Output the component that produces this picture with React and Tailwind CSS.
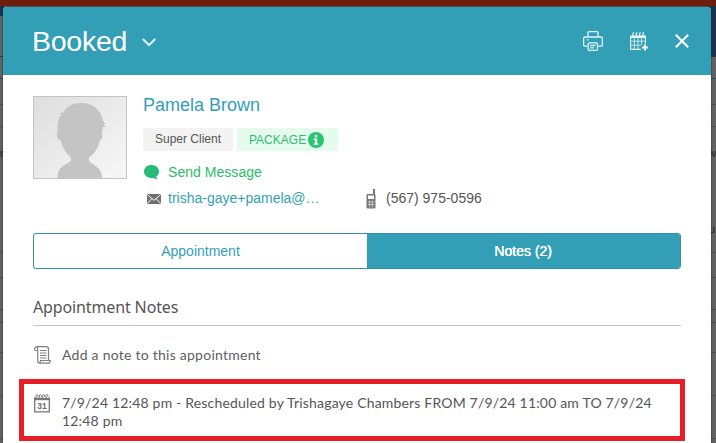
import React from 'react';

// Heights of the dimmed calendar rows that show on both sides of the dialog
const gridRows = ['h-[26px]', 'h-[22px]', 'h-[126px]', 'h-[25px]', 'h-[32px]', 'h-[13px]', 'h-[30px]', 'h-[43px]', 'h-[43px]'];

function PrinterIcon() {
    return (
        <svg width="20" height="20" viewBox="0 0 20 20" fill="none" stroke="#dff5f8" strokeWidth="1.3">
            <path d="M5 6V1.5Q5 .6 6 .6H14Q15 .6 15 1.5V6" />
            <path d="M4.5 15.2H2Q.6 15.2 .6 13.8V7.5Q.6 6 2 6H18Q19.4 6 19.4 7.5V13.8Q19.4 15.2 18 15.2H15.5" />
            <rect x="5.1" y="11.8" width="9.4" height="7.6" rx="1.4" />
            <path d="M7 14.5h5.5M7 16.8h4M3.8 8.8h1.8" />
        </svg>
    );
}

function CalendarPlusIcon() {
    return (
        <svg width="19" height="19" viewBox="0 0 19 19" fill="none" stroke="#e4f7f9">
            <path d="M.6 4V17.4H11M.6 4H15.4V12" strokeWidth="1.1" />
            <path d="M1 5H15.4" strokeWidth="2" />
            <path d="M1 9.2H15M1 13.2H11M4.4 5V17M8 5V17M11.6 5V13" strokeWidth=".8" />
            <path d="M3 4.5V2Q3 .6 4.2 .8M6.3 4.5V2Q6.3 .6 7.5 .8M9.6 4.5V2Q9.6 .6 10.8 .8M12.9 4.5V2Q12.9 .6 14.1 .8" strokeWidth="1.2" />
            <path d="M15 12.5V18.5M12 15.5H18" stroke="#fff" strokeWidth="1.8" />
        </svg>
    );
}

function Avatar() {
    return (
        <svg className="block" width="92" height="81" viewBox="0 0 92 81">
            <defs>
                <linearGradient id="photo" x1="0" y1="0" x2="1" y2="1">
                    <stop offset="0" stopColor="#dedede" />
                    <stop offset="1" stopColor="#f7f7f7" />
                </linearGradient>
            </defs>
            <rect width="92" height="81" fill="url(#photo)" />
            <path
                d="M23.5 81C23.5 72 28 69 34 66C37 64.500 37.500 62.500 36.500 60C31.500 56 28 49 26.500 43C23 43 23 40 23.500 38.500L21.500 37.500L23.500 36.500C24 31 23 26 25.500 20L27.500 18L25.500 16.500L29.500 15.500C32 9 40 6 47 6C58 6 65 12 68 20C69 23 69 25 71.500 27L69.500 27.500L72 30H68.500C69 33 68 35 67.500 36.500C69.500 39 68.500 42 66 43C64.500 50 61 56 55.500 60C54 62.500 55 65 58 66.500C64 70 68 74 68 81Z"
                fill="#c5c4c5"
            />
        </svg>
    );
}

function PhoneIcon() {
    return (
        <svg width="10" height="20" viewBox="0 0 10 20">
            <path d="M7 0H9V6H7Z" fill="#777" />
            <rect x=".5" y="5" width="9" height="14.500" rx="1" fill="#777" />
            <path d="M2 6.500H8V10H2Z" fill="#fff" />
            <path d="M2 13H8.500M2 15.500H8.500M3.700 11.500V18.500M6.300 11.500V18.500" stroke="#ddd" strokeWidth=".7" />
        </svg>
    );
}

function ScrollIcon() {
    return (
        <svg width="17" height="18" viewBox="0 0 17 18" fill="none" stroke="#808080" strokeWidth="1.2">
            <path d="M3.500 4.500H1.500Q.6 4.500 .6 3Q.6 1 2.500 .7H12.500Q14.500 .7 14.500 3V14" />
            <path d="M2.500 .7Q3.700 1.200 3.700 3V14.500Q3.700 17.200 6 17.200H14.500Q16.300 17 16.300 14.500H6.500Q6.500 17 5 17.200" />
            <path d="M6 4.500H12.500M6 7H12.500M6 9.500H12.500M6 12H12.500" />
        </svg>
    );
}

function CalendarIcon() {
    return (
        <svg width="16" height="19" viewBox="0 0 16 19" fill="none" stroke="#777">
            <path d="M.7 3.500V17.800H15.300V3.500" strokeWidth="1.3" />
            <path d="M0 5H16" strokeWidth="2.400" />
            <path d="M2 4V2Q2 .7 3.200 .7T4.200 3M5.300 4V2Q5.300 .7 6.500 .7T7.500 3M8.600 4V2Q8.600 .7 9.800 .7T10.800 3M11.900 4V2Q11.900 .7 13.100 .7T14.100 3" strokeWidth=".9" />
            <text x="8" y="15" textAnchor="middle" fill="#6c6c6c" stroke="none" fontSize="8.500" fontWeight="bold" letterSpacing="0" fontFamily="Liberation Sans, sans-serif">31</text>
        </svg>
    );
}

export default function App() {
    return (
        <div className="relative h-[443px] w-[716px] overflow-hidden bg-[#626262] font-['Liberation_Sans',Arial,sans-serif] text-[#555]">
            {/* dimmed page */}
            <div className="absolute inset-0">
                <div className="h-[6px] bg-[#6f1d0d]" />
                <div className="flex h-[51px] justify-between border-b border-[#333]">
                    <div className="h-[10px] w-[4px] bg-[#19334d]" />
                    <div className="w-[8px] bg-[#19334d]" />
                </div>
                <div className="h-[22px] border-b border-[#24545c]" />
                {gridRows.map((row, index) => (
                    <div key={index} className={`border-b border-[#4b4b4b] ${row}`} />
                ))}
            </div>
            <div className="absolute left-[708px] top-[146px] text-[11px] leading-[14px] text-[#222]">w</div>
            <div className="absolute left-[709px] top-[222px] text-[11px] leading-[14px] text-[#222]">u</div>
            <div className="absolute left-0 top-[146px] text-[11px] leading-[14px] text-[#222]">r</div>

            {/* dialog */}
            <div className="absolute left-[3px] top-[7px] flex h-[436px] w-[708px] flex-col rounded-t-[4px] bg-white shadow-[0_0_2px_#222]">
                <div className="flex h-[68px] shrink-0 items-center rounded-t-[4px] bg-[#339fb6] pl-[29px] pr-[22px] text-white">
                    <h1 className="w-[95px] text-[28.5px] leading-[34px] tracking-[-0.25px]">Booked</h1>
                    <svg className="ml-[15px] mt-[3px]" width="14" height="9" viewBox="0 0 14 9" fill="none" stroke="#e8f8fa" strokeWidth="2">
                        <path d="M.8 1L7 7.200L13.200 1" />
                    </svg>
                    <div className="ml-auto flex items-center">
                        <PrinterIcon />
                        <span className="ml-[27px]"><CalendarPlusIcon /></span>
                        <svg className="ml-[26px]" width="14" height="14" viewBox="0 0 14 14" stroke="#fff" strokeWidth="2">
                            <path d="M.8 .8L13.200 13.200M13.200 .8L.8 13.200" />
                        </svg>
                    </div>
                </div>

                <div className="flex h-[158px] shrink-0 px-[30px] pt-[21px]">
                    <div className="h-[83px] w-[94px] shrink-0 border border-[#c4c4c4]">
                        <Avatar />
                    </div>
                    <div className="ml-4 flex-1">
                        <h2 className="-mt-px h-[20px] text-[18px] leading-[20px] text-[#339fb6]">Pamela Brown</h2>
                        <div className="mt-[13px] flex h-[23px] gap-1 text-[12px] leading-[22px]">
                            <span className="w-[90px] rounded-[3px] bg-[#f3f3f3] text-center">Super Client</span>
                            <span className="flex w-[101px] items-center rounded-[3px] bg-[#e4fbee] pl-[12px] text-[#2fbe70]">
                                PACKAGE
                                <svg className="ml-[2px]" width="16" height="16" viewBox="0 0 16 16">
                                    <circle cx="8" cy="8" r="8" fill="#27c56f" />
                                    <path d="M6.800 3H9.200V5.200H6.800ZM5.800 6.500H9.200V11.500H10.300V13H5.700V11.500H6.900V8H5.800Z" fill="#fff" />
                                </svg>
                            </span>
                        </div>
                        <div className="mt-[13px] flex h-[17px] items-center text-[14px] leading-[17px] text-[#1fbe68]">
                            <svg className="ml-[1px]" width="15" height="15" viewBox="0 0 15 15" fill="#26bb76">
                                <path d="M7.500 0C11.700 0 15 2.800 15 6.400C15 8.600 14 10.200 12.200 11.500C12.200 12.800 13 13.600 14 14.100C11.800 14.400 10.300 13.600 9.400 12.700C4.500 13.600 0 11 0 6.400C0 2.800 3.300 0 7.500 0Z" />
                            </svg>
                            <span className="ml-[9px] tracking-[0.04px]">Send Message</span>
                        </div>
                        <div className="mt-[7px] flex h-[20px] items-center text-[14px] leading-[20px]">
                            <svg className="ml-[4px] mt-[2px]" width="14" height="10" viewBox="0 0 14 10">
                                <rect width="14" height="10" rx="1" fill="#707070" />
                                <path d="M.5 .7L7 6.300L13.500 .7M.5 9.300L5 4.600M13.500 9.300L9 4.600" fill="none" stroke="#fff" />
                            </svg>
                            <span className="ml-[7px] w-[198px] text-[#339fb6]">trisha-gaye+pamela@…</span>
                            <span className="mt-[1px]"><PhoneIcon /></span>
                            <span className="ml-[10px]">(567) 975-0596</span>
                        </div>
                    </div>
                </div>

                <div className="mx-[30px] flex h-[36px] shrink-0 overflow-hidden rounded-[3px] border border-[#3690a3] text-[14px] leading-[34px]">
                    <button className="w-[333px] text-[#339fb6]">Appointment</button>
                    <button className="flex-1 bg-[#339fb6] pr-px text-white [text-shadow:0.4px_0_currentColor]">Notes (2)</button>
                </div>

                <h3 className="mx-[30px] mt-[26px] h-[31px] shrink-0 border-b border-[#c5c5c5] font-['Noto_Sans',sans-serif] text-[16px] leading-[24px] tracking-[-0.13px]">Appointment Notes</h3>

                <div className="ml-[31px] mt-[19px] flex h-[20px] shrink-0 items-center gap-[11px] font-['Lato',sans-serif] text-[14px] tracking-[0.25px] text-[#606060]">
                    <ScrollIcon />
                    <span className="-mt-[2px]">Add a note to this appointment</span>
                </div>

                <div className="ml-[16px] mt-[14px] flex h-[62px] w-[666px] shrink-0 border-[5px] border-[#e71d27] pl-[10px] pt-[10px] font-['Lato',sans-serif] text-[14px] leading-[18px] tracking-[0.18px]">
                    <CalendarIcon />
                    <p className="ml-[12px] whitespace-nowrap">
                        7/9/24 12:48 pm - Rescheduled by Trishagaye Chambers FROM 7/9/24 11:00 am TO 7/9/24<br />
                        12:48 pm
                    </p>
                </div>
            </div>
        </div>
    );
}
